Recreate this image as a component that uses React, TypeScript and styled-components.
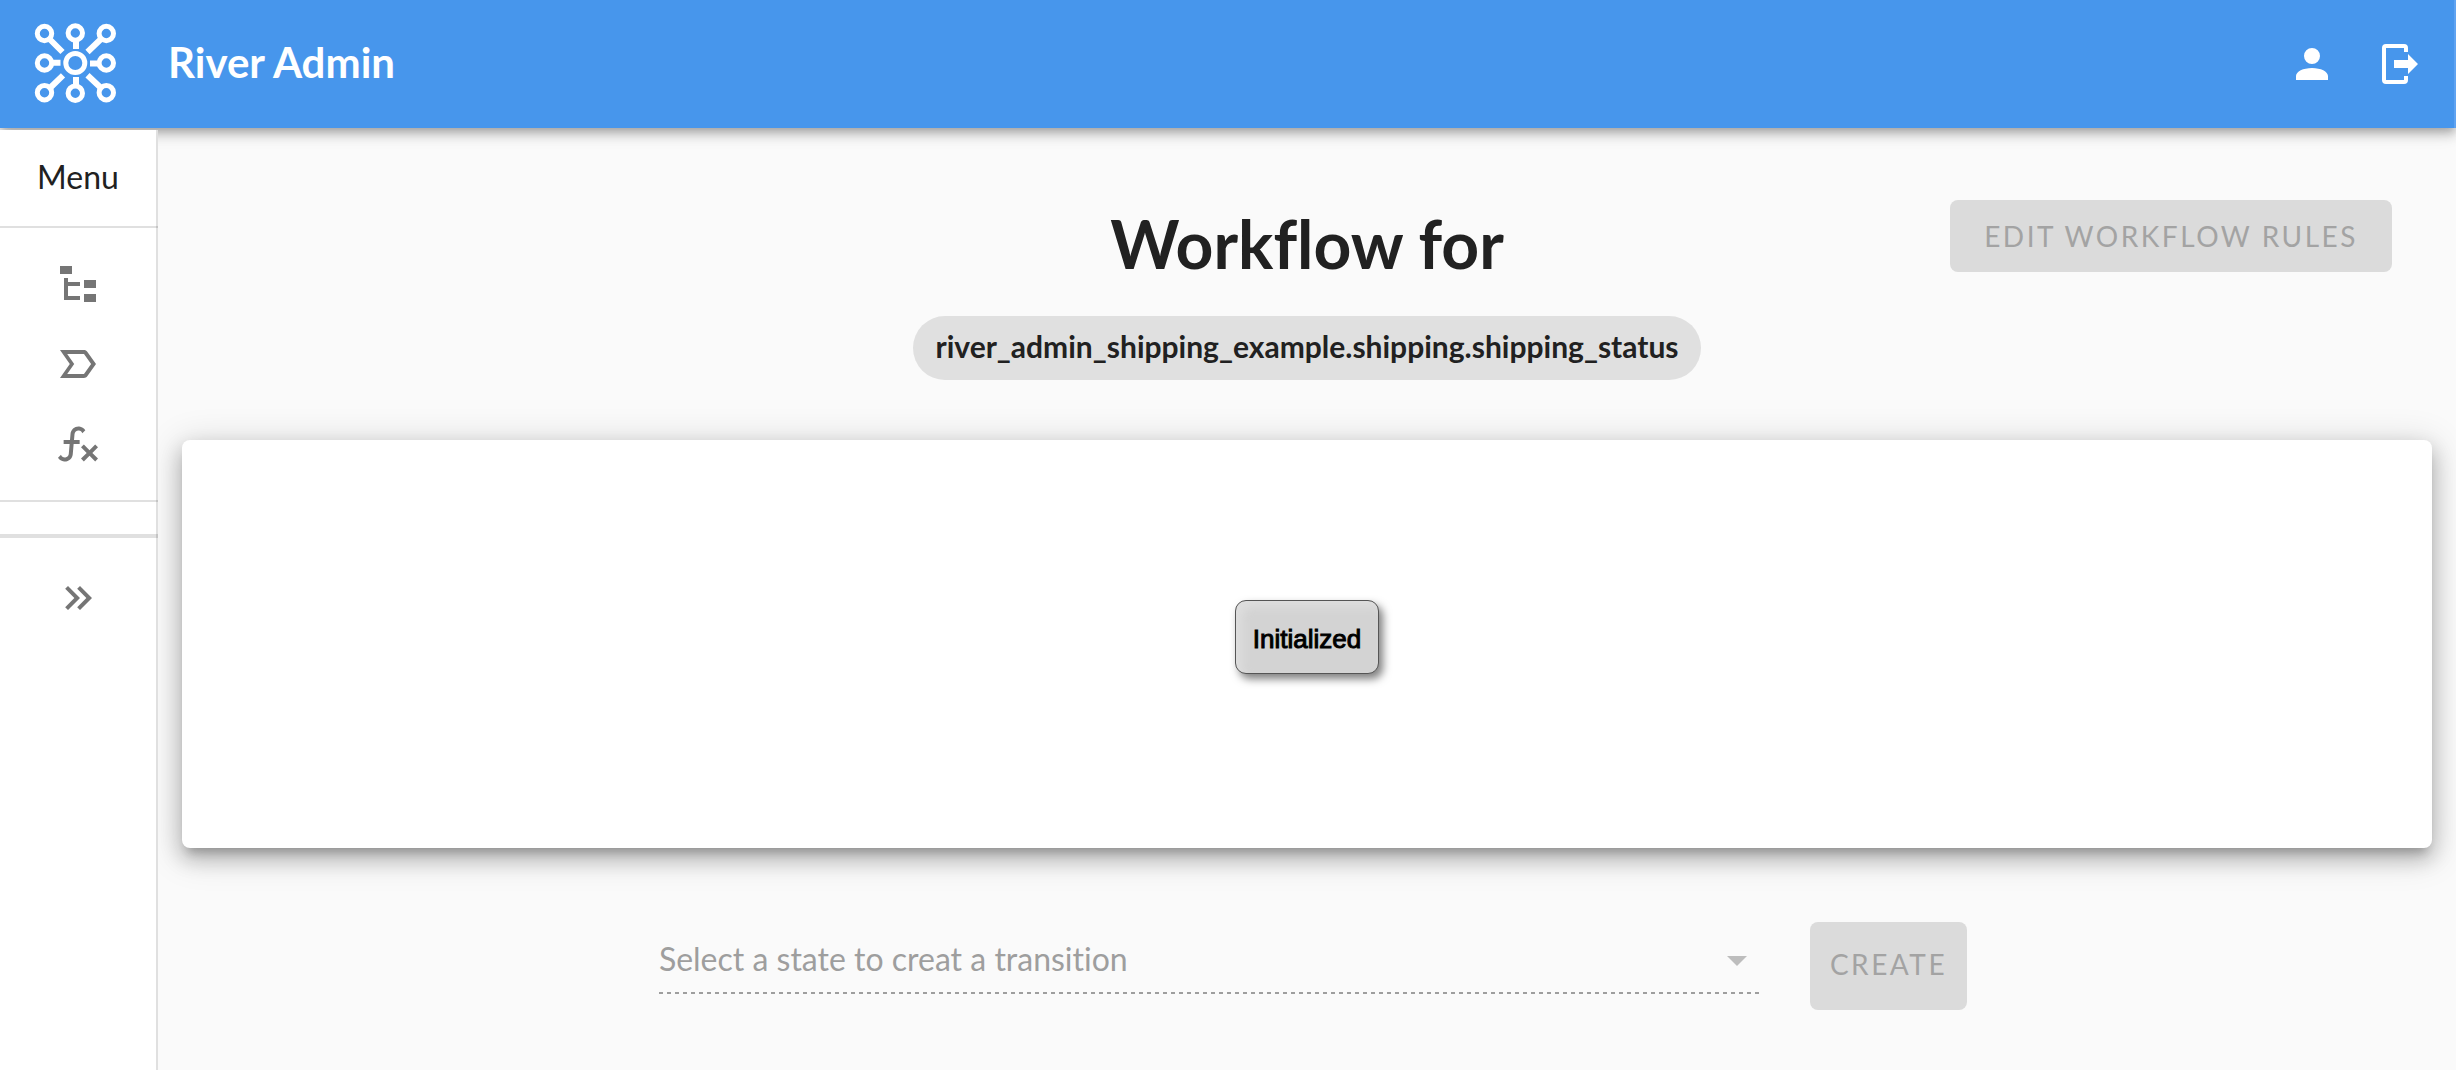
import React from "react";
import styled, { createGlobalStyle } from "styled-components";

const GlobalStyle = createGlobalStyle`
  *, *::before, *::after { box-sizing: border-box; }
  body {
    margin: 0;
    background: #fafafa;
    color: #212121;
    font-family: Lato, "Open Sans", sans-serif;
    font-size: 32px;
    font-variant-ligatures: none;
  }
  button, select { font-family: inherit; font-variant-ligatures: none; }
`;

const Page = styled.div`
  display: flex;
  flex-direction: column;
  min-height: 100vh;
`;

const AppBar = styled.header`
  display: flex;
  align-items: center;
  height: 128px;
  padding: 0 28px 0 34px;
  background: #4796ec;
  border-right: 2px solid #5fa3f1;
  color: #fff;
  box-shadow: 0 4px 8px -2px rgba(0, 0, 0, 0.2), 0 8px 10px rgba(0, 0, 0, 0.14),
    0 2px 20px rgba(0, 0, 0, 0.12);
  z-index: 1;
`;

const Logo = styled.svg`
  width: 84px;
  height: 82px;
  margin-bottom: 2px;
  fill: none;
  stroke: currentColor;
  stroke-width: 5;
`;

const AppTitle = styled.div`
  flex: 1;
  margin-left: 50px;
  padding-bottom: 4px;
  font-size: 42px;
  font-weight: 700;
  line-height: 48px;
`;

const AppActions = styled.div`
  display: flex;
  gap: 42px;
`;

const IconButton = styled.button`
  display: flex;
  padding: 0;
  border: 0;
  background: none;
  color: inherit;
  cursor: pointer;
`;

const IconSvg = styled.svg`
  display: block;
  width: 48px;
  height: 48px;
  fill: currentColor;
`;

const Body = styled.div`
  display: flex;
  flex: 1;
`;

const Sidebar = styled.nav`
  width: 158px;
  flex: none;
  margin-top: 2px;
  background: #fff;
  border-right: 2px solid #e0e0e0;
  z-index: 2;
`;

const MenuTitle = styled.div`
  display: flex;
  align-items: center;
  justify-content: center;
  height: 96px;
  padding-bottom: 4px;
  font-size: 32px;
`;

const Divider = styled.hr<{ $thick?: boolean }>`
  height: ${(p) => (p.$thick ? 4 : 2)}px;
  margin: 0 -2px 0 0;
  border: 0;
  background: rgba(0, 0, 0, 0.12);
`;

const NavList = styled.div`
  padding: 16px 0;
`;

const NavFooter = styled.div`
  padding: 20px 0;
`;

const Spacer = styled.div`
  height: 32px;
`;

const navItem = `
  display: flex;
  align-items: center;
  justify-content: center;
  width: 100%;
  height: 80px;
  padding: 0;
  border: 0;
  background: none;
  color: #757575;
`;

const NavLink = styled.a`
  ${navItem}
`;

const NavToggle = styled.button`
  ${navItem}
  cursor: pointer;
`;

const Main = styled.main`
  flex: 1;
  min-width: 0;
`;

const Heading = styled.section`
  display: grid;
  grid-template-columns: 1fr auto 1fr;
  align-items: start;
  padding: 72px 64px 60px;
`;

const HeadingText = styled.div`
  grid-column: 2;
  display: flex;
  flex-direction: column;
  align-items: center;
  gap: 32px;
`;

const Title = styled.h1`
  margin: 0;
  padding-top: 4px;
  font-size: 66px;
  font-weight: 700;
  line-height: 80px;
`;

const Chip = styled.span`
  display: flex;
  align-items: center;
  height: 64px;
  padding: 0 22px 4px;
  border-radius: 32px;
  background: #e0e0e0;
  font-size: 30px;
  font-weight: 700;
`;

const ActionButton = styled.button<{ $tall?: boolean }>`
  height: ${(p) => (p.$tall ? 88 : 72)}px;
  padding: 0 ${(p) => (p.$tall ? "20px 4px" : "34px")};
  border: 0;
  border-radius: 8px;
  background: #dbdbdb;
  color: #a3a3a3;
  font-size: 28px;
  font-weight: 400;
  letter-spacing: 0.09em;
  white-space: nowrap;
  text-transform: uppercase;
`;

const HeadingAction = styled.div`
  justify-self: end;
`;

const Canvas = styled.section`
  display: flex;
  align-items: center;
  justify-content: center;
  height: 408px;
  margin: 0 24px;
  padding-bottom: 14px;
  border-radius: 8px;
  background: #fff;
  box-shadow: 0 10px 10px -6px rgba(0, 0, 0, 0.2),
    0 10px 20px 2px rgba(0, 0, 0, 0.2), 0 6px 36px 4px rgba(0, 0, 0, 0.14);
`;

const StateNode = styled.div`
  display: flex;
  align-items: center;
  justify-content: center;
  width: 144px;
  height: 74px;
  padding-top: 4px;
  border: 1px solid #555;
  border-radius: 11px;
  background: #d3d3d3;
  box-shadow: 4px 5px 8px rgba(0, 0, 0, 0.5), inset 6px 6px 10px #dedede;
  color: #000;
  font-family: "Liberation Sans", Arial, sans-serif;
  font-size: 26px;
  -webkit-text-stroke: 1px #000;
`;

const TransitionForm = styled.form`
  display: flex;
  justify-content: center;
  gap: 48px;
  padding: 74px 0 60px 12px;
`;

const SelectField = styled.div`
  position: relative;
  width: calc(50% - 40px);
  min-width: 0;
  height: 72px;
  background: repeating-linear-gradient(90deg, #9e9e9e 0 4px, transparent 4px 8px)
    bottom / 100% 2px no-repeat;
`;

const StateSelect = styled.select`
  width: 100%;
  height: 72px;
  padding: 0 60px 0 0;
  border: 0;
  appearance: none;
  background: none;
  color: #9e9e9e;
  opacity: 1;
  font-size: 32px;
`;

const Caret = styled(IconSvg)`
  position: absolute;
  right: 1px;
  top: 14px;
  color: #bdbdbd;
  pointer-events: none;
`;

const paths = {
  account:
    "M12,4A4,4 0 0,1 16,8A4,4 0 0,1 12,12A4,4 0 0,1 8,8A4,4 0 0,1 12,4M12,14C16.42,14 20,15.79 20,18V20H4V18C4,15.79 7.58,14 12,14Z",
  logout:
    "M15,17V14H8V10H15V7L20,12L15,17M13,2A2,2 0 0,1 15,4V6H13V4H4V20H13V18H15V20A2,2 0 0,1 13,22H4A2,2 0 0,1 2,20V4A2,2 0 0,1 4,2H13Z",
  tree: "M3,3H9V7H3V3M15,10H21V14H15V10M15,17H21V21H15V17M13,13H7V18H13V20H5V9H7V11H13V13Z",
  label:
    "M3,5L7.9,12L3,19H15C15.65,19 16.26,18.69 16.63,18.16L21,12L16.63,5.84C16.26,5.31 15.65,5 15,5H3M6.6,7H15L18.55,12L15,17H6.6L10.1,12L6.6,7Z",
  func: "M12.42,5.29C11.32,5.19 10.35,6 10.25,7.11L10,10H12.82V12H9.82L9.38,17.07C9.18,19.27 7.24,20.9 5.04,20.7C3.79,20.59 2.66,19.9 2,18.83L3.5,17.33C3.83,18.38 4.96,18.97 6,18.63C6.78,18.39 7.33,17.7 7.4,16.89L7.82,12H4.82V10H8L8.27,6.93C8.46,4.73 10.39,3.1 12.6,3.28C13.86,3.39 15,4.09 15.66,5.17L14.16,6.67C13.91,5.9 13.23,5.36 12.42,5.29M22,13.65L20.59,12.24L17.76,15.07L14.93,12.24L13.5,13.65L16.35,16.5L13.5,19.31L14.93,20.72L17.76,17.89L20.59,20.72L22,19.31L19.17,16.5L22,13.65Z",
  expand:
    "M5.59,7.41L7,6L13,12L7,18L5.59,16.59L10.17,12L5.59,7.41M11.59,7.41L13,6L19,12L13,18L11.59,16.59L16.17,12L11.59,7.41Z",
  caret: "M7,10L12,15L17,10H7Z",
};

function Icon({ name }: { name: keyof typeof paths }) {
  return (
    <IconSvg viewBox="0 0 24 24" aria-hidden="true">
      <path d={paths[name]} fillRule="evenodd" />
    </IconSvg>
  );
}

const logoNodes = [
  [44.5, 33.5], [75.3, 33], [106.3, 33.5],
  [44.5, 63], [106.3, 63],
  [44.5, 92.7], [75.3, 93.2], [106.3, 92.7],
];

function RiverLogo() {
  return (
    <Logo viewBox="34 22 84 82" aria-hidden="true">
      {logoNodes.map(([cx, cy]) => (
        <circle key={`${cx}-${cy}`} cx={cx} cy={cy} r="7.2" />
      ))}
      <circle cx="75.3" cy="63" r="9.5" />
      <path
        strokeWidth="6"
        d="M50,39.5L62.5,52M100.5,39.5L87.5,52M76,41V49M52,62.7H60.5M90,63.5H98M76,77V85M63,75.3L50.5,87.5M87.5,75.3L100.5,87.5"
      />
    </Logo>
  );
}

export default function App() {
  return (
    <>
      <GlobalStyle />
      <Page>
        <AppBar>
          <RiverLogo />
          <AppTitle>River Admin</AppTitle>
          <AppActions>
            <IconButton type="button" aria-label="Account">
              <Icon name="account" />
            </IconButton>
            <IconButton type="button" aria-label="Log out">
              <Icon name="logout" />
            </IconButton>
          </AppActions>
        </AppBar>
        <Body>
          <Sidebar>
            <MenuTitle>Menu</MenuTitle>
            <Divider />
            <NavList>
              <NavLink href="#workflows" aria-label="Workflows">
                <Icon name="tree" />
              </NavLink>
              <NavLink href="#states" aria-label="States">
                <Icon name="label" />
              </NavLink>
              <NavLink href="#functions" aria-label="Functions">
                <Icon name="func" />
              </NavLink>
            </NavList>
            <Divider />
            <Spacer />
            <Divider $thick />
            <NavFooter>
              <NavToggle type="button" aria-label="Expand menu">
                <Icon name="expand" />
              </NavToggle>
            </NavFooter>
          </Sidebar>
          <Main>
            <Heading>
              <HeadingText>
                <Title>Workflow for</Title>
                <Chip>river_admin_shipping_example.shipping.shipping_status</Chip>
              </HeadingText>
              <HeadingAction>
                <ActionButton type="button" disabled>
                  Edit workflow rules
                </ActionButton>
              </HeadingAction>
            </Heading>
            <Canvas>
              <StateNode>Initialized</StateNode>
            </Canvas>
            <TransitionForm>
              <SelectField>
                <StateSelect aria-label="State" disabled defaultValue="">
                  <option value="">Select a state to creat a transition</option>
                </StateSelect>
                <Caret viewBox="0 0 24 24" aria-hidden="true">
                  <path d={paths.caret} />
                </Caret>
              </SelectField>
              <ActionButton type="submit" $tall disabled>
                Create
              </ActionButton>
            </TransitionForm>
          </Main>
        </Body>
      </Page>
    </>
  );
}
